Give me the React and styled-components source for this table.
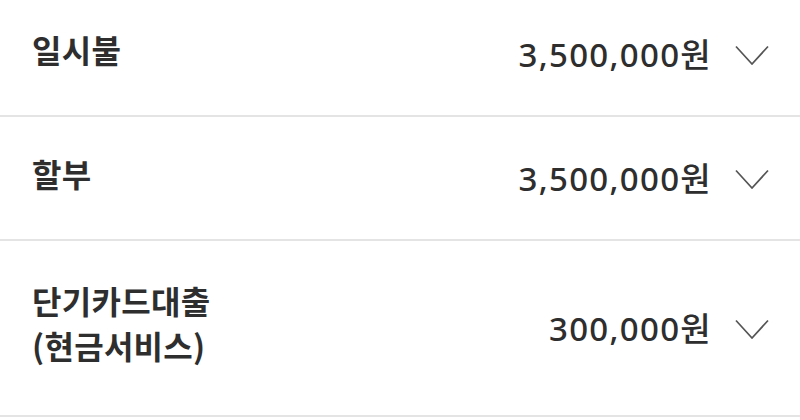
import React from 'react';
import styled, { createGlobalStyle } from 'styled-components';

const GlobalStyle = createGlobalStyle`
    html, body {
        margin: 0;
        padding: 0;
        background: #fff;
    }
    body {
        font-family: "Noto Sans CJK KR", "Noto Sans", sans-serif;
        color: #2e2e2e;
        overflow: hidden;
    }
`;

const List = styled.ul`
    list-style: none;
    margin: -7px 0 0;
    padding: 0;
`;

const Row = styled.li`
    display: flex;
    align-items: center;
    justify-content: space-between;
    min-height: 124px;
    padding: ${props => (props.$tall ? '37px' : '0')} 31px ${props => (props.$tall ? '37px' : '0')} 32px;
    box-sizing: border-box;
    border-bottom: 2px solid #e4e4e4;
`;

const Label = styled.div`
    font-size: 32px;
    font-weight: 700;
    line-height: 45px;
    letter-spacing: 0.3px;
    padding-bottom: 10px;
`;

const Right = styled.div`
    display: flex;
    align-items: center;
    gap: 23px;
    padding-bottom: 3px;
`;

const Amount = styled.span`
    font-family: "Noto Sans", "Noto Sans CJK KR", sans-serif;
    font-size: 33px;
    font-weight: 500;
    letter-spacing: 1.3px;
`;

const ChevronIcon = styled.svg`
    margin-top: 6px;
`;

const Chevron = () => (
    <ChevronIcon width="34" height="21" viewBox="0 0 34 21" fill="none">
        <polyline points="1,1.5 17,19 33,1.5" stroke="#555" strokeWidth="1.7" strokeLinejoin="miter" />
    </ChevronIcon>
);

const items = [
    { label: ['일시불'], amount: '3,500,000원' },
    { label: ['할부'], amount: '3,500,000원' },
    { label: ['단기카드대출', '(현금서비스)'], amount: '300,000원' },
];

export default function App() {
    return (
        <>
            <GlobalStyle />
            <List>
                {items.map(item => (
                    <Row key={item.label[0]} $tall={item.label.length > 1}>
                        <Label>
                            {item.label.map(line => <div key={line}>{line}</div>)}
                        </Label>
                        <Right>
                            <Amount>{item.amount}</Amount>
                            <Chevron />
                        </Right>
                    </Row>
                ))}
            </List>
        </>
    );
}
